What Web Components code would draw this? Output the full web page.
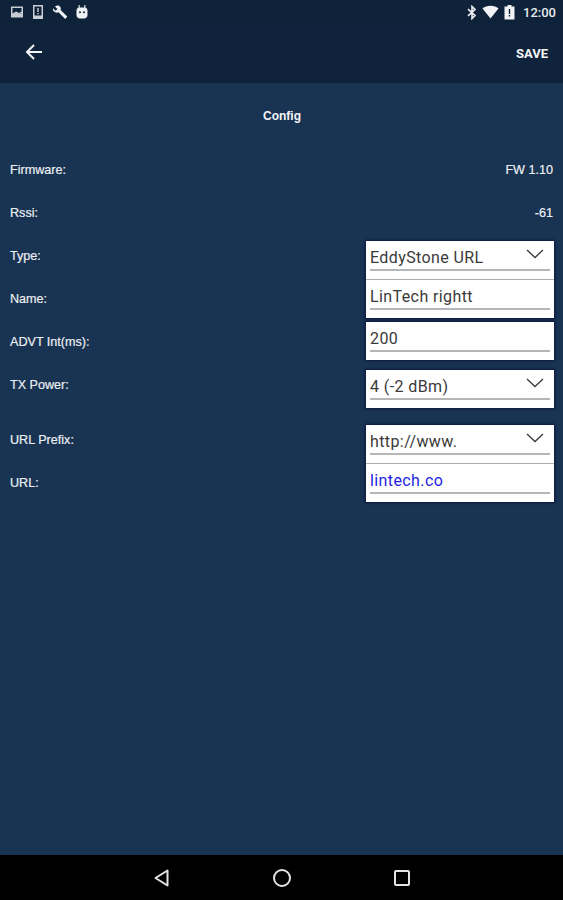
<!DOCTYPE html>
<html>
<head>
<meta charset="utf-8">
<style>
    html, body { margin: 0; height: 100%; }
    body {
        display: flex;
        flex-direction: column;
        height: 900px;
        overflow: hidden;
        background: #193353;
        font-family: "Liberation Sans", Arial, sans-serif;
        color: #fff;
    }
</style>
</head>
<body>
<status-bar></status-bar>
<app-toolbar action="SAVE"></app-toolbar>
<config-screen heading="Config">
    <config-row slot="info" label="Firmware:" value="FW 1.10"></config-row>
    <config-row slot="info" label="Rssi:" value="-61"></config-row>

    <field-label slot="labels">Type:</field-label>
    <field-label slot="labels">Name:</field-label>
    <field-label slot="labels">ADVT Int(ms):</field-label>
    <field-label slot="labels">TX Power:</field-label>
    <field-label slot="labels" style="margin-top:12px">URL Prefix:</field-label>
    <field-label slot="labels">URL:</field-label>

    <field-box slot="fields">
        <field-line dropdown>EddyStone URL</field-line>
        <field-line>LinTech rightt</field-line>
    </field-box>
    <field-box slot="fields" style="margin-top:4px">
        <field-line>200</field-line>
    </field-box>
    <field-box slot="fields" style="margin-top:10px">
        <field-line dropdown>4 (-2 dBm)</field-line>
    </field-box>
    <field-box slot="fields" style="margin-top:17px">
        <field-line dropdown>http://www.</field-line>
        <field-line link>lintech.co</field-line>
    </field-box>
</config-screen>
<nav-bar></nav-bar>

<script>
class StatusBar extends HTMLElement {
    constructor() {
        super();
        this.attachShadow({ mode: 'open' });
    }

    connectedCallback() {
        this.shadowRoot.innerHTML = `
            <style>
                :host {
                    display: flex;
                    align-items: center;
                    height: 24px;
                    padding: 0 7px 0 10px;
                    background: #0e2239;
                    color: #fff;
                    font-family: Roboto, sans-serif;
                }
                .left, .right { display: flex; align-items: center; }
                .left { gap: 7px; }
                .right { margin-left: auto; gap: 5px; }
                svg { display: block; fill: #f0f2f4; }
                svg.dim { fill: #c9ced4; }
                .time { font-size: 13px; font-weight: 500; margin-left: 3px; color: #e8eaed; }
            </style>
            <div class="left">
                <svg class="dim" width="14" height="14" viewBox="0 0 14 14"><path fill-rule="evenodd" d="M1 1.500h12v11H1zM2.500 3v5.500l3.500-2 3 1.500 2.500-1.500V3zM5 9h6.500V8.500L9 9z"/></svg>
                <svg class="dim" width="14" height="16" viewBox="0 0 14 16"><path fill-rule="evenodd" d="M2 1h10v14H2zM3.500 2.500V11.500h7V2.500zM6.300 4h1.400v4H6.300zM6.300 9h1.400v1.300H6.300z"/></svg>
                <svg width="16" height="16" viewBox="0 0 16 16"><path d="M1 4.200 3.600 6.700 5.500 5 3 2.400C4.600 1 7 1.200 8.100 2.700 8.900 3.700 9 5 8.600 6L15.300 12.600 13.200 15 6.500 8.300C5 8.900 3.300 8.700 2 7.500 1 6.500.7 5.400 1 4.200Z"/></svg>
                <svg width="14" height="16" viewBox="0 0 14 16"><path fill-rule="evenodd" d="M3.600 1h1.100v2.400h4.600V1h1.100v2.600c1.300.6 2.100 1.900 2.100 3.400v4C12.500 13 11 14.500 9 14.500H5C3 14.500 1.500 13 1.500 11V7c0-1.500.8-2.800 2.100-3.400zM4 8.200a1 1 0 1 0 2 0 1 1 0 1 0-2 0zM8 8.200a1 1 0 1 0 2 0 1 1 0 1 0-2 0z"/></svg>
            </div>
            <div class="right">
                <svg width="10" height="15" viewBox="0 0 10 15"><path fill="none" stroke="#f0f2f4" stroke-width="1.600" d="M1 4.200 8 10.500 5 13.500V1.500L8 4.500 1 10.800"/></svg>
                <svg width="17" height="14" viewBox="0 0 17 14"><path d="M.5 3.500C2.500 1.700 5.300.7 8.500.7s6 1 8 2.800L8.500 13.500Z"/></svg>
                <svg width="11" height="15" viewBox="0 0 11 15"><path fill-rule="evenodd" d="M3.500 0h4v1.500h3v13H.5v-13h3zM4.800 4v5h1.400V4zM4.800 10v1.400h1.400V10z"/></svg>
                <span class="time">12:00</span>
            </div>
        `;
    }
}

class AppToolbar extends HTMLElement {
    constructor() {
        super();
        this.attachShadow({ mode: 'open' });
    }

    connectedCallback() {
        const action = this.getAttribute('action') || '';
        this.shadowRoot.innerHTML = `
            <style>
                :host {
                    display: flex;
                    align-items: center;
                    justify-content: space-between;
                    height: 59px;
                    padding: 0 15px 0 25px;
                    background: #0f243c;
                    box-sizing: border-box;
                    font-family: Roboto, sans-serif;
                }
                svg { display: block; margin-top: -3px; }
                span { font-size: 13px; font-weight: 700; color: #f4f5f7; margin-top: -1px; }
            </style>
            <svg width="18" height="18" viewBox="0 0 18 18" fill="none" stroke="#f4f5f7" stroke-width="2"><path d="M17 9H2M9 2 2 9l7 7"/></svg>
            <span>${action}</span>
        `;
    }
}

class ConfigScreen extends HTMLElement {
    constructor() {
        super();
        this.attachShadow({ mode: 'open' });
    }

    connectedCallback() {
        const heading = this.getAttribute('heading') || '';
        this.shadowRoot.innerHTML = `
            <style>
                :host {
                    display: block;
                    flex: 1;
                    padding: 0 9px 0 10px;
                    background: #193353;
                }
                h1 {
                    margin: 0;
                    height: 65px;
                    padding-top: 2px;
                    box-sizing: border-box;
                    line-height: 63px;
                    text-align: center;
                    font-size: 12px;
                    font-weight: 700;
                    color: #f4f5f7;
                }
                .split {
                    display: flex;
                    justify-content: space-between;
                    align-items: flex-start;
                }
                .labels { display: flex; flex-direction: column; }
                .fields { display: flex; flex-direction: column; width: 188px; margin-top: 7px; }
            </style>
            <h1>${heading}</h1>
            <slot name="info"></slot>
            <div class="split">
                <div class="labels"><slot name="labels"></slot></div>
                <div class="fields"><slot name="fields"></slot></div>
            </div>
        `;
    }
}

class ConfigRow extends HTMLElement {
    constructor() {
        super();
        this.attachShadow({ mode: 'open' });
    }

    connectedCallback() {
        this.shadowRoot.innerHTML = `
            <style>
                :host {
                    display: flex;
                    justify-content: space-between;
                    align-items: center;
                    height: 43px;
                    padding-right: 1px;
                    font-size: 12.6px;
                    color: #eceff2;
                    -webkit-text-stroke: 0.2px #eceff2;
                }
            </style>
            <span>${this.getAttribute('label') || ''}</span>
            <span>${this.getAttribute('value') || ''}</span>
        `;
    }
}

class FieldLabel extends HTMLElement {
    constructor() {
        super();
        this.attachShadow({ mode: 'open' });
    }

    connectedCallback() {
        this.shadowRoot.innerHTML = `
            <style>
                :host {
                    display: flex;
                    align-items: center;
                    height: 43px;
                    font-size: 12.6px;
                    color: #eceff2;
                    -webkit-text-stroke: 0.2px #eceff2;
                }
            </style>
            <slot></slot>
        `;
    }
}

class FieldBox extends HTMLElement {
    constructor() {
        super();
        this.attachShadow({ mode: 'open' });
    }

    connectedCallback() {
        this.shadowRoot.innerHTML = `
            <style>
                :host {
                    display: flex;
                    flex-direction: column;
                    gap: 1px;
                    background: #a9adb2;
                    box-shadow: 0 0 2px 1px #0b1a38;
                }
            </style>
            <slot></slot>
        `;
    }
}

class FieldLine extends HTMLElement {
    constructor() {
        super();
        this.attachShadow({ mode: 'open' });
    }

    connectedCallback() {
        const arrow = this.hasAttribute('dropdown')
            ? '<svg width="18" height="10" viewBox="0 0 18 10" fill="none" stroke="#3a3a3a" stroke-width="1.300"><path d="M1 1l8 7.500L17 1"/></svg>'
            : '';
        this.shadowRoot.innerHTML = `
            <style>
                :host {
                    display: block;
                    height: 38px;
                    padding: 0 4px;
                    background: #fff;
                    box-sizing: border-box;
                    font-family: Roboto, sans-serif;
                    font-size: 16px;
                    letter-spacing: 0.4px;
                    color: ${this.hasAttribute('link') ? '#1f1fe0' : '#3a3a3a'};
                }
                .line {
                    display: flex;
                    align-items: center;
                    justify-content: space-between;
                    height: 30px;
                    padding-right: 6px;
                    box-sizing: border-box;
                    border-bottom: 2px solid #b4b6b9;
                }
                span { padding-top: 5px; }
                svg { display: block; margin-top: -3px; }
            </style>
            <div class="line"><span><slot></slot></span>${arrow}</div>
        `;
    }
}

class NavBar extends HTMLElement {
    constructor() {
        super();
        this.attachShadow({ mode: 'open' });
    }

    connectedCallback() {
        this.shadowRoot.innerHTML = `
            <style>
                :host {
                    display: flex;
                    align-items: center;
                    justify-content: center;
                    gap: 100px;
                    height: 45px;
                    background: #000;
                }
                svg { display: block; fill: none; stroke: #e4e4e4; stroke-width: 2; }
            </style>
            <svg width="20" height="20" viewBox="0 0 20 20"><path d="M15.500 2.500v15L3.500 10z" stroke-linejoin="round"/></svg>
            <svg width="20" height="20" viewBox="0 0 20 20"><circle cx="10" cy="10" r="8"/></svg>
            <svg width="20" height="20" viewBox="0 0 20 20"><rect x="3" y="3" width="14" height="14" rx="1"/></svg>
        `;
    }
}

customElements.define('status-bar', StatusBar);
customElements.define('app-toolbar', AppToolbar);
customElements.define('config-screen', ConfigScreen);
customElements.define('config-row', ConfigRow);
customElements.define('field-label', FieldLabel);
customElements.define('field-box', FieldBox);
customElements.define('field-line', FieldLine);
customElements.define('nav-bar', NavBar);
</script>
</body>
</html>
